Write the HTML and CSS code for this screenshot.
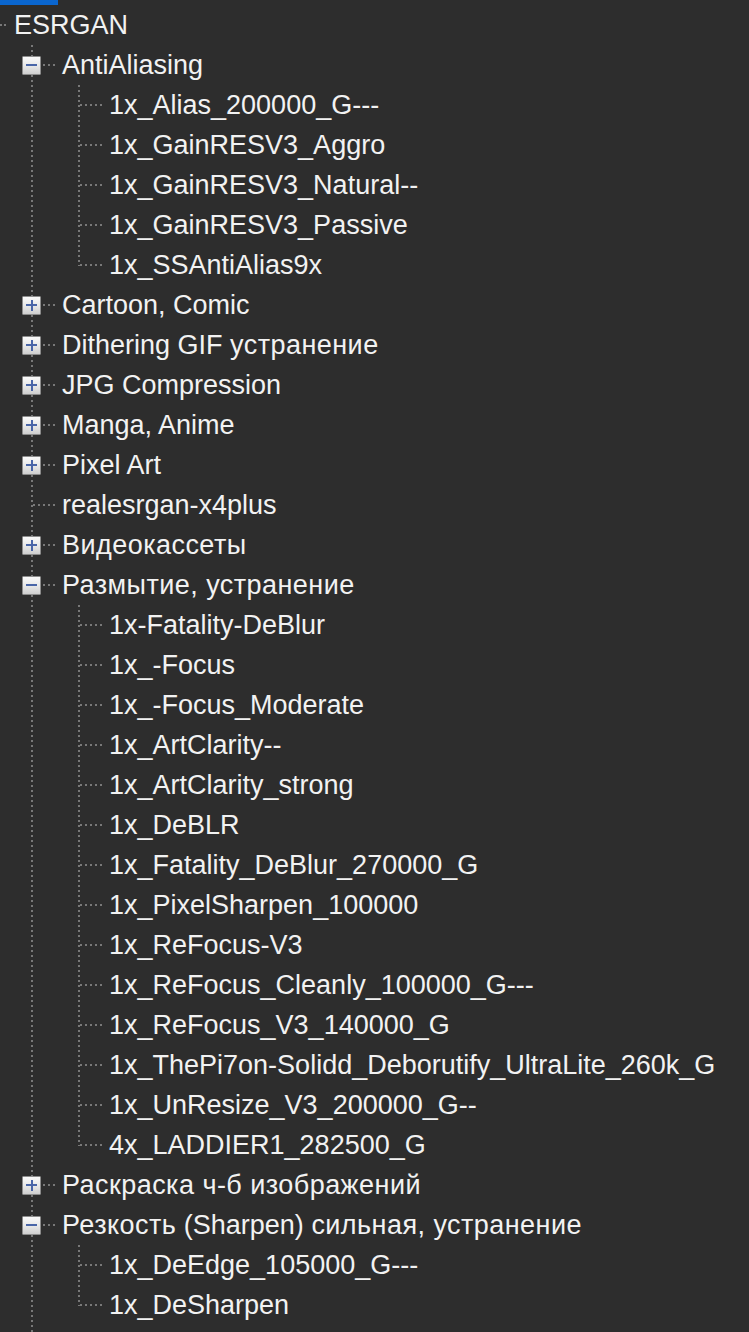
FILE: index.html
```html
<!DOCTYPE html>
<html>
<head>
<meta charset="utf-8">
<link rel="stylesheet" href="styles.css">
</head>
<body>
<div class="topbar"></div>
<div class="tree">
  <div class="row"><span class="conn root"></span><span class="label">ESRGAN</span></div>
  <div class="row"><span class="conn"><span class="toggle minus"></span></span><span class="label">AntiAliasing</span></div>
  <div class="row"><span class="lane"></span><span class="conn"></span><span class="label">1x_Alias_200000_G---</span></div>
  <div class="row"><span class="lane"></span><span class="conn"></span><span class="label">1x_GainRESV3_Aggro</span></div>
  <div class="row"><span class="lane"></span><span class="conn"></span><span class="label">1x_GainRESV3_Natural--</span></div>
  <div class="row"><span class="lane"></span><span class="conn"></span><span class="label">1x_GainRESV3_Passive</span></div>
  <div class="row"><span class="lane"></span><span class="conn last"></span><span class="label">1x_SSAntiAlias9x</span></div>
  <div class="row"><span class="conn"><span class="toggle plus"></span></span><span class="label">Cartoon, Comic</span></div>
  <div class="row"><span class="conn"><span class="toggle plus"></span></span><span class="label">Dithering GIF <span class="cy">устранение</span></span></div>
  <div class="row"><span class="conn"><span class="toggle plus"></span></span><span class="label">JPG Compression</span></div>
  <div class="row"><span class="conn"><span class="toggle plus"></span></span><span class="label">Manga, Anime</span></div>
  <div class="row"><span class="conn"><span class="toggle plus"></span></span><span class="label">Pixel Art</span></div>
  <div class="row"><span class="conn"></span><span class="label">realesrgan-x4plus</span></div>
  <div class="row"><span class="conn"><span class="toggle plus"></span></span><span class="label cy">Видеокассеты</span></div>
  <div class="row"><span class="conn"><span class="toggle minus"></span></span><span class="label cy">Размытие, устранение</span></div>
  <div class="row"><span class="lane"></span><span class="conn"></span><span class="label">1x-Fatality-DeBlur</span></div>
  <div class="row"><span class="lane"></span><span class="conn"></span><span class="label">1x_-Focus</span></div>
  <div class="row"><span class="lane"></span><span class="conn"></span><span class="label">1x_-Focus_Moderate</span></div>
  <div class="row"><span class="lane"></span><span class="conn"></span><span class="label">1x_ArtClarity--</span></div>
  <div class="row"><span class="lane"></span><span class="conn"></span><span class="label">1x_ArtClarity_strong</span></div>
  <div class="row"><span class="lane"></span><span class="conn"></span><span class="label">1x_DeBLR</span></div>
  <div class="row"><span class="lane"></span><span class="conn"></span><span class="label">1x_Fatality_DeBlur_270000_G</span></div>
  <div class="row"><span class="lane"></span><span class="conn"></span><span class="label">1x_PixelSharpen_100000</span></div>
  <div class="row"><span class="lane"></span><span class="conn"></span><span class="label">1x_ReFocus-V3</span></div>
  <div class="row"><span class="lane"></span><span class="conn"></span><span class="label">1x_ReFocus_Cleanly_100000_G---</span></div>
  <div class="row"><span class="lane"></span><span class="conn"></span><span class="label">1x_ReFocus_V3_140000_G</span></div>
  <div class="row"><span class="lane"></span><span class="conn"></span><span class="label">1x_ThePi7on-Solidd_Deborutify_UltraLite_260k_G</span></div>
  <div class="row"><span class="lane"></span><span class="conn"></span><span class="label">1x_UnResize_V3_200000_G--</span></div>
  <div class="row"><span class="lane"></span><span class="conn last"></span><span class="label">4x_LADDIER1_282500_G</span></div>
  <div class="row"><span class="conn"><span class="toggle plus"></span></span><span class="label cy">Раскраска ч-б изображений</span></div>
  <div class="row"><span class="conn"><span class="toggle minus"></span></span><span class="label"><span class="cy">Резкость</span> (Sharpen) <span class="cy">сильная, устранение</span></span></div>
  <div class="row"><span class="lane"></span><span class="conn"></span><span class="label">1x_DeEdge_105000_G---</span></div>
  <div class="row"><span class="lane"></span><span class="conn last"></span><span class="label">1x_DeSharpen</span></div>
  <div class="row"><span class="lane"></span></div>
</div>
</body>
</html>
```

FILE: styles.css
```css
html, body {
  margin: 0;
  padding: 0;
  background: #2d2d2d;
}

body {
  width: 749px;
  height: 1332px;
  overflow: hidden;
  font-family: "Liberation Sans", Arial, sans-serif;
}

.topbar {
  width: 58px;
  height: 5px;
  background: #0a66cf;
}

.tree {
  display: flex;
  flex-direction: column;
}

.row {
  display: flex;
  align-items: stretch;
  height: 40px;
}

.lane {
  flex: none;
  width: 47px;
  height: 40px;
  background-image: repeating-linear-gradient(to bottom, #787878 0 2px, transparent 2px 5px);
  background-size: 2px 100%;
  background-position: 31px 0;
  background-repeat: no-repeat;
}

.conn {
  flex: none;
  position: relative;
  width: 60px;
  height: 40px;
  background-image:
    repeating-linear-gradient(to bottom, #787878 0 2px, transparent 2px 5px),
    repeating-linear-gradient(to right, #787878 0 2px, transparent 2px 5px);
  background-size: 2px 100%, 22px 2px;
  background-position: 31px 0, 33px 19px;
  background-repeat: no-repeat;
}

.conn.last {
  background-size: 2px 21px, 22px 2px;
}

.conn.root {
  width: 12px;
  background-image: repeating-linear-gradient(to right, #787878 0 2px, transparent 2px 4px);
  background-size: 7px 2px;
  background-position: 0 19px;
}

.toggle {
  position: absolute;
  left: 22px;
  top: 11px;
  width: 19px;
  height: 19px;
  box-sizing: border-box;
  border: 1px solid #8c8c8c;
  border-radius: 1px;
  background: linear-gradient(180deg, #fafafa 0%, #e6e6e6 55%, #cfcfcf 100%);
}

.toggle::before {
  content: "";
  position: absolute;
  left: 3px;
  top: 7px;
  width: 11px;
  height: 2px;
  background: #4a66a8;
}

.toggle.plus::after {
  content: "";
  position: absolute;
  left: 7.5px;
  top: 3px;
  width: 2px;
  height: 11px;
  background: #4a66a8;
}

.label {
  padding-left: 2px;
  font-size: 27px;
  line-height: 40px;
  color: #f2f2f2;
  white-space: nowrap;
}

.cy {
  letter-spacing: 0.45px;
}
```
